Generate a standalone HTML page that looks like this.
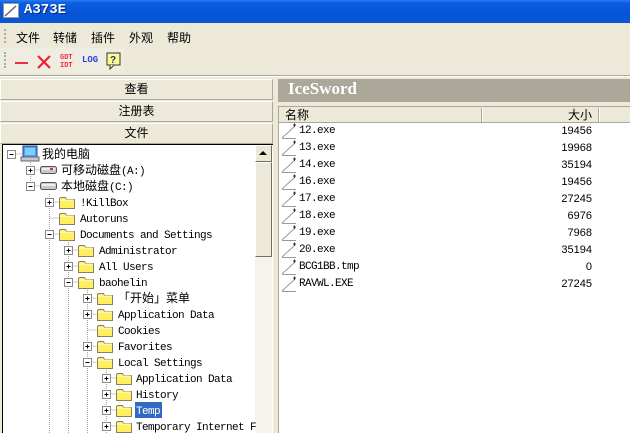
<!DOCTYPE html>
<html><head><meta charset="utf-8"><style>
*{margin:0;padding:0;box-sizing:border-box}
body{width:630px;height:433px;overflow:hidden;background:#ece9d8;position:relative;font-family:"Liberation Sans","Noto Sans CJK SC",sans-serif;font-size:12px;color:#000}
.a{position:absolute}
.title{left:0;top:0;width:630px;height:23px;background:linear-gradient(#2a7cf0 0,#0a5ee0 3px,#0554d8 60%,#0a56d6 100%)}
.menu span{position:absolute;top:29px;font-size:12px}
.btn{left:0;width:273px;height:21px;background:#ece9d8;border:1px solid #fff;border-right-color:#aca899;border-bottom-color:#aca899;text-align:center;line-height:19px;font-size:12px}
.mono{font-family:"Liberation Mono","Noto Sans CJK SC",monospace;font-size:11px;letter-spacing:-0.6px}
.row{position:absolute;left:299px;height:17px;line-height:17px}
.sz{position:absolute;left:480px;width:112px;text-align:right;height:17px;line-height:17px;font-size:11px}
</style></head><body>
<div class="a title"></div>
<svg class="a" style="left:3px;top:3px" width="17" height="16"><rect x="0.5" y="0.5" width="15" height="14" fill="#fff" stroke="#999"/><path d="M2 13 L13 3" stroke="#666" stroke-width="1.5"/></svg>
<div class="a" style="left:24px;top:2px;color:#fff;font-weight:bold;font-size:14px;font-family:'Liberation Mono',monospace;text-shadow:1px 1px #0a2a80">A373E</div>
<div class="menu">
<div class="a" style="left:4px;top:29px;width:2px;height:14px;border-left:2px dotted #b0ad9c"></div>
<span style="left:16px">文件</span><span style="left:53px">转储</span><span style="left:91px">插件</span><span style="left:129px">外观</span><span style="left:167px">帮助</span>
</div>
<div class="a" style="left:0;top:48px;width:124px;height:25px;background:#efede2"></div>
<div class="a" style="left:4px;top:52px;width:2px;height:16px;border-left:2px dotted #b0ad9c"></div>
<div class="a" style="left:15px;top:62px;width:13px;height:2px;background:#f0303a"></div>
<svg class="a" style="left:37px;top:55px" width="14" height="14"><path d="M1 1L13 13M13 1L1 13" stroke="#f02030" stroke-width="2.2"/></svg>
<div class="a" style="left:60px;top:54px;color:#f03040;font-size:7px;line-height:8px;font-family:'Liberation Mono',monospace;font-weight:bold">GDT<br>IDT</div>
<div class="a" style="left:82px;top:55px;color:#3040e0;font-size:9px;font-weight:bold;font-family:'Liberation Mono',monospace">LOG</div>
<svg class="a" style="left:106px;top:52px" width="16" height="18"><rect x="1" y="1" width="13" height="12" fill="#fffb90" stroke="#333"/><path d="M4 13 L4 17 L8 13" fill="#fffb90" stroke="#333"/><text x="4" y="11" font-size="10" font-weight="bold" fill="#2030a0" font-family="Liberation Sans">?</text></svg>
<div class="a" style="left:0;top:75px;width:630px;height:1px;background:#aca899"></div>
<div class="a" style="left:0;top:76px;width:630px;height:1px;background:#fff"></div>

<div class="a btn" style="top:79px">查看</div>
<div class="a btn" style="top:101px">注册表</div>
<div class="a btn" style="top:123px">文件</div>

<div class="a" style="left:2px;top:144px;width:271px;height:289px;background:#fff;border-top:1px solid #000;border-left:1px solid #000"></div>
<div class="a" style="left:255px;top:145px;width:17px;height:288px;background:#f4f3ee"></div>
<div class="a" style="left:255px;top:145px;width:17px;height:17px;background:#ece9d8;border:1px solid #fff;border-right-color:#716f64;border-bottom-color:#716f64"></div>
<svg class="a" style="left:259px;top:150px" width="9" height="6"><path d="M0 5L4 1L8 5Z" fill="#000"/></svg>
<div class="a" style="left:255px;top:162px;width:17px;height:95px;background:#ece9d8;border:1px solid #fff;border-right-color:#716f64;border-bottom-color:#716f64"></div>

<svg class="a" style="left:0;top:0" width="273" height="433" font-family="Liberation Mono,Noto Sans CJK SC,monospace" font-size="11" letter-spacing="-0.6">
<defs>
<g id="f"><path d="M0.5 3.5 L0.5 13.5 L15.5 13.5 L15.5 4.5 L7.5 4.5 L6.5 2.5 L1.5 2.5 Z" fill="#fff060" stroke="#8a8060"/><path d="M1 5 L15 5" stroke="#fffce0"/></g>
<g id="p"><rect x="0.5" y="0.5" width="8" height="8" fill="#fff" stroke="#8a8a8a"/><path d="M2.5 4.5H6.5M4.5 2.5V6.5" stroke="#000"/></g>
<g id="m"><rect x="0.5" y="0.5" width="8" height="8" fill="#fff" stroke="#8a8a8a"/><path d="M2.5 4.5H6.5" stroke="#000"/></g>
<g id="d"><rect x="0.5" y="3.5" width="16" height="7" rx="2" fill="#c8c8c8" stroke="#555"/><rect x="2" y="5" width="13" height="2" fill="#eee"/></g>
</defs>
<g stroke="#a0a0a0" stroke-dasharray="1 1" fill="none">
<path d="M11.5 154H22M30.5 160V186M30.5 170H40M30.5 186H40"/>
<path d="M49.5 194V433M49.5 202H59M49.5 218H59M49.5 234H59"/>
<path d="M68.5 242V433M68.5 250H78M68.5 266H78M68.5 282H78"/>
<path d="M87.5 290V433M87.5 298H97M87.5 314H97M87.5 330H97M87.5 346H97M87.5 362H97"/>
<path d="M106.5 370V433M106.5 378H116M106.5 394H116M106.5 410H116M106.5 426H116"/>
</g>
<use href="#m" x="7" y="150"/>
<rect x="23" y="146" width="14" height="11" fill="#4aa0f0" stroke="#2040a0"/><rect x="25" y="148" width="10" height="7" fill="#7fd0ff"/><rect x="21" y="157" width="18" height="4" fill="#c8c8c8" stroke="#666"/>
<text x="42" y="158" font-size="12" letter-spacing="0">我的电脑</text>
<use href="#p" x="26" y="166"/><use href="#d" x="40" y="163"/><rect x="50" y="168" width="3" height="2" fill="#e03030"/><text x="61" y="174"><tspan font-size="12" letter-spacing="0">可移动磁盘</tspan>(A:)</text>
<use href="#m" x="26" y="182"/><use href="#d" x="40" y="179"/><text x="61" y="190"><tspan font-size="12" letter-spacing="0">本地磁盘</tspan>(C:)</text>
<use href="#p" x="45" y="198"/><use href="#f" x="59" y="195"/><text x="80" y="206">!KillBox</text>
<use href="#f" x="59" y="211"/><text x="80" y="222">Autoruns</text>
<use href="#m" x="45" y="230"/><use href="#f" x="59" y="227"/><text x="80" y="238">Documents and Settings</text>
<use href="#p" x="64" y="246"/><use href="#f" x="78" y="243"/><text x="99" y="254">Administrator</text>
<use href="#p" x="64" y="262"/><use href="#f" x="78" y="259"/><text x="99" y="270">All Users</text>
<use href="#m" x="64" y="278"/><use href="#f" x="78" y="275"/><text x="99" y="286">baohelin</text>
<use href="#p" x="83" y="294"/><use href="#f" x="97" y="291"/><text x="118" y="302" font-size="12" letter-spacing="0">「开始」菜单</text>
<use href="#p" x="83" y="310"/><use href="#f" x="97" y="307"/><text x="118" y="318">Application Data</text>
<use href="#f" x="97" y="323"/><text x="118" y="334">Cookies</text>
<use href="#p" x="83" y="342"/><use href="#f" x="97" y="339"/><text x="118" y="350">Favorites</text>
<use href="#m" x="83" y="358"/><use href="#f" x="97" y="355"/><text x="118" y="366">Local Settings</text>
<use href="#p" x="102" y="374"/><use href="#f" x="116" y="371"/><text x="136" y="382">Application Data</text>
<use href="#p" x="102" y="390"/><use href="#f" x="116" y="387"/><text x="136" y="398">History</text>
<use href="#p" x="102" y="406"/><use href="#f" x="116" y="403"/><rect x="135" y="402" width="27" height="16" fill="#316ac5"/><text x="136" y="414" fill="#fff">Temp</text>
<use href="#p" x="102" y="422"/><use href="#f" x="116" y="419"/><text x="136" y="430">Temporary Internet F</text>
</svg>

<div class="a" style="left:278px;top:79px;width:352px;height:23px;background:#aca899"></div>
<div class="a" style="left:288px;top:79px;color:#fff;font-family:'Liberation Serif',serif;font-weight:bold;font-size:17px">IceSword</div>
<div class="a" style="left:278px;top:106px;width:352px;height:327px;background:#fff;border-top:1px solid #aca899;border-left:1px solid #aca899"></div>
<div class="a" style="left:279px;top:107px;width:351px;height:16px;background:#ece9d8;border-bottom:1px solid #aca899"></div>
<div class="a" style="left:481px;top:108px;width:1px;height:14px;background:#aca899"></div><div class="a" style="left:482px;top:108px;width:1px;height:14px;background:#fff"></div>
<div class="a" style="left:598px;top:108px;width:1px;height:14px;background:#aca899"></div><div class="a" style="left:599px;top:108px;width:1px;height:14px;background:#fff"></div>
<div class="a" style="left:285px;top:107px;line-height:16px">名称</div>
<div class="a" style="left:568px;top:107px;line-height:16px">大小</div>
<svg class="a" style="left:281px;top:123px" width="16" height="170">
<g id="fi" stroke="#999" fill="none"><path d="M1 15.5H15M1 15L14 3"/><path d="M12 2L15 2M13.5 0.5V4" stroke="#333"/></g>
<use href="#fi" y="17"/><use href="#fi" y="34"/><use href="#fi" y="51"/><use href="#fi" y="68"/><use href="#fi" y="85"/><use href="#fi" y="102"/><use href="#fi" y="119"/><use href="#fi" y="136"/><use href="#fi" y="153"/>
</svg>
<div class="mono">
<div class="row" style="top:123px">12.exe</div><div class="row" style="top:140px">13.exe</div><div class="row" style="top:157px">14.exe</div><div class="row" style="top:174px">16.exe</div><div class="row" style="top:191px">17.exe</div><div class="row" style="top:208px">18.exe</div><div class="row" style="top:225px">19.exe</div><div class="row" style="top:242px">20.exe</div><div class="row" style="top:259px">BCG1BB.tmp</div><div class="row" style="top:276px">RAVWL.EXE</div>
</div>
<div class="sz" style="top:123px">19456</div><div class="sz" style="top:140px">19968</div><div class="sz" style="top:157px">35194</div><div class="sz" style="top:174px">19456</div><div class="sz" style="top:191px">27245</div><div class="sz" style="top:208px">6976</div><div class="sz" style="top:225px">7968</div><div class="sz" style="top:242px">35194</div><div class="sz" style="top:259px">0</div><div class="sz" style="top:276px">27245</div>
</body></html>
